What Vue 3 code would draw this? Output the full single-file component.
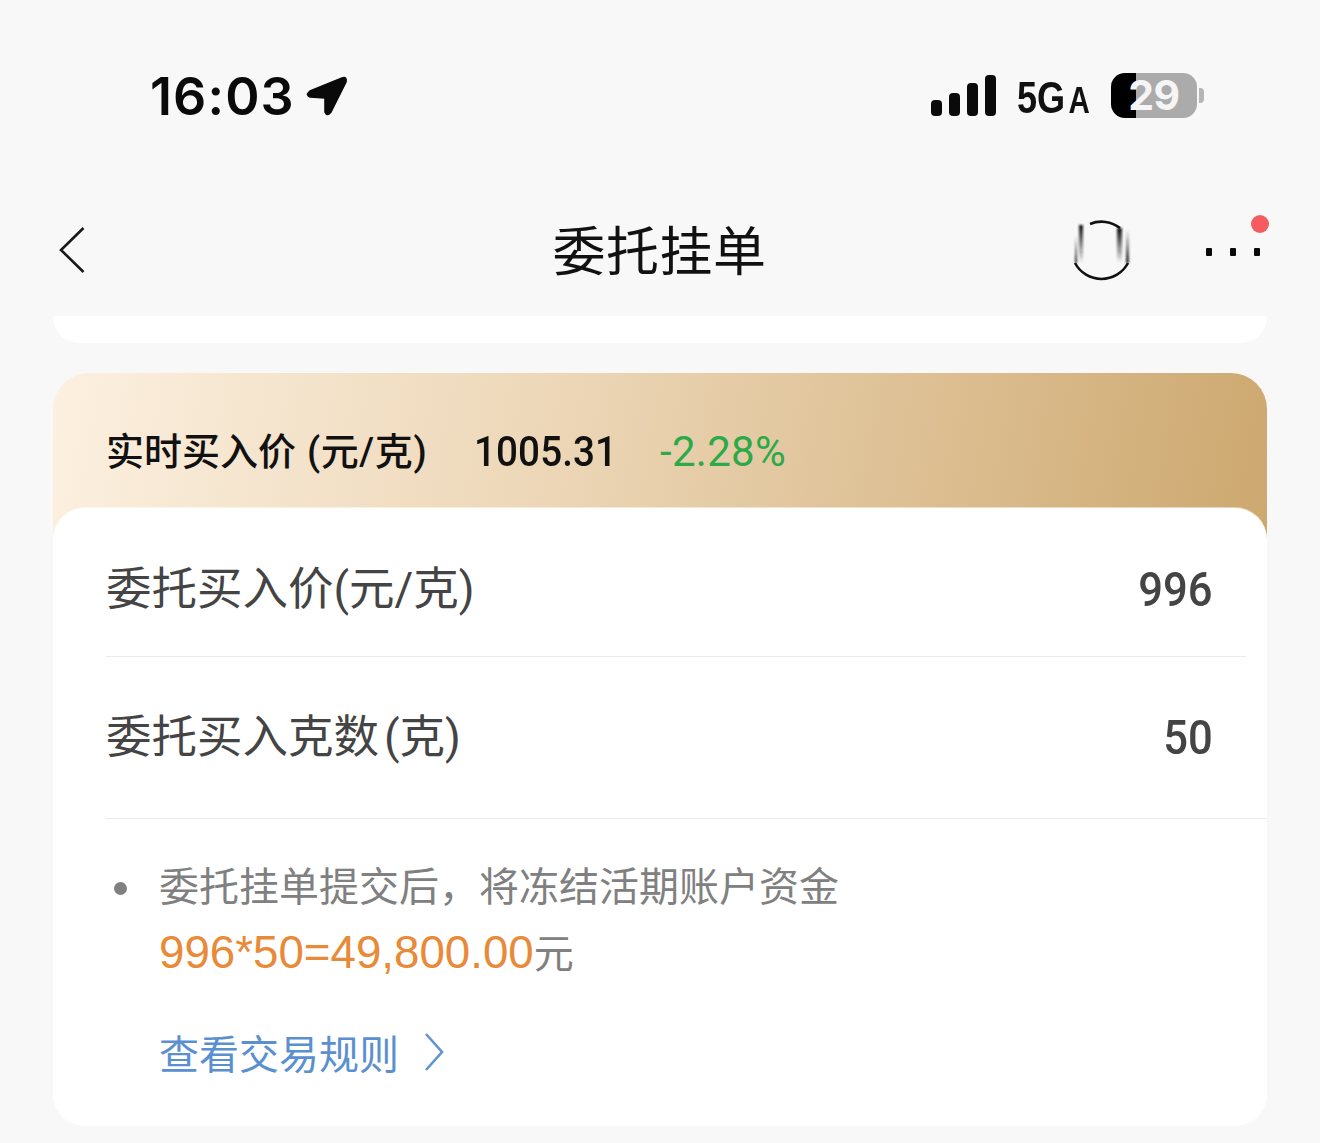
<script setup>
const bars = [16, 23, 33, 41];
</script>

<template>
  <main class="page">
    <div class="status">
      <div class="status-left">
        <span class="time">16:03</span>
        <svg class="arrow" viewBox="0 0 42 42" width="42" height="42">
          <path d="M36 3 L4 16 Q-1 20 4 22 L19 23 L19 37 Q21 42 25 37 L40 7 Q41 1 36 3 Z" fill="#0a0a0a" stroke="#0a0a0a" stroke-width="1.6" stroke-linejoin="round" />
        </svg>
      </div>
      <div class="status-right">
        <div class="signal">
          <i v-for="h in bars" :key="h" :style="{ height: h + 'px' }"></i>
        </div>
        <span class="net">5G<small>A</small></span>
        <div class="battery"><span>29</span></div>
        <i class="nub"></i>
      </div>
    </div>

    <nav class="nav">
      <svg class="back" viewBox="0 0 26 48" width="26" height="48">
        <path d="M24.5 2 L2 24 L24.5 46" fill="none" stroke="#1a1a1a" stroke-width="2.6" />
      </svg>
      <h1 class="title">委托挂单</h1>
      <div class="nav-right">
        <svg class="spinner" viewBox="0 0 60 66" width="60" height="66">
          <defs>
            <linearGradient id="fade" x1="0" y1="0" x2="0" y2="1">
              <stop offset="0" stop-color="#111" />
              <stop offset="1" stop-color="#111" stop-opacity="0.03" />
            </linearGradient>
            <linearGradient id="fadeUp" x1="0" y1="1" x2="0" y2="0">
              <stop offset="0" stop-color="#222" />
              <stop offset="1" stop-color="#222" stop-opacity="0" />
            </linearGradient>
            <filter id="soft" x="-100%" y="-10%" width="300%" height="120%">
              <feGaussianBlur stdDeviation="0.9" />
            </filter>
          </defs>
          <path d="M3 47 A30 30 0 0 0 56 47" fill="none" stroke="#111" stroke-width="2.6" />
          <path d="M18 8 A30 30 0 0 1 48 12" fill="none" stroke="#111" stroke-width="2.6" />
          <g filter="url(#soft)">
            <rect x="7" y="9" width="4" height="37" fill="url(#fade)" />
            <rect x="45" y="12" width="5" height="34" fill="url(#fade)" />
            <rect x="54" y="14" width="3" height="33" fill="url(#fadeUp)" />
            <rect x="3" y="20" width="2" height="27" fill="url(#fadeUp)" />
          </g>
        </svg>
        <div class="more">
          <i></i><i></i><i></i>
          <b class="red-dot"></b>
        </div>
      </div>
    </nav>

    <div class="peek"></div>

    <section class="gold">
      <span class="gold-label">实时买入价<span class="unit">(元/克)</span></span>
      <span class="gold-price">1005.31</span>
      <span class="gold-change">-2.28%</span>
    </section>

    <section class="card">
      <div class="row row-price">
        <span class="row-label">委托买入价<span class="unit tight">(元/克)</span></span>
        <span class="row-value">996</span>
      </div>
      <div class="row row-grams">
        <span class="row-label">委托买入克数<span class="unit">(克)</span></span>
        <span class="row-value">50</span>
      </div>
      <div class="note">
        <i class="bullet"></i>
        <p>委托挂单提交后，将冻结活期账户资金<br><span class="sum">996*50=49,800.00</span>元</p>
      </div>
      <a class="rules">
        查看交易规则
        <svg viewBox="0 0 22 40" width="22" height="40">
          <path d="M3 2 L19 20 L3 38" fill="none" stroke="#5f93d2" stroke-width="2.6" />
        </svg>
      </a>
    </section>
  </main>
</template>

<style>
html, body {
  margin: 0;
  background: #f8f8f8;
  overflow: hidden;
}
</style>

<style scoped>
.page {
  width: 1320px;
  height: 1143px;
  font-family: Roboto, "Noto Sans CJK SC", sans-serif;
}

.status {
  height: 192px;
  padding: 0 116px 0 150px;
  display: flex;
  align-items: center;
  justify-content: space-between;
}
.status-left {
  display: flex;
  align-items: center;
  gap: 11px;
}
.time {
  font-family: Inter, sans-serif;
  font-size: 52px;
  font-weight: 600;
  color: #0a0a0a;
  letter-spacing: 1.1px;
}
.status-right {
  display: flex;
  align-items: center;
  margin-top: -2px;
}
.signal {
  display: flex;
  align-items: flex-end;
  gap: 7px;
  height: 41px;
}
.signal i {
  width: 11px;
  border-radius: 4px;
  background: #0a0a0a;
}
.net {
  display: inline-block;
  margin: 6px 0 0 21px;
  width: 94px;
  font-family: "Liberation Sans", sans-serif;
  font-size: 44px;
  font-weight: 700;
  color: #111;
  white-space: nowrap;
  transform: scaleX(0.82);
  transform-origin: left center;
}
.net small {
  font-size: 36px;
  margin-left: 4px;
}
.battery {
  width: 86px;
  height: 45px;
  border-radius: 14px;
  background: linear-gradient(90deg, #000 29%, #ababab 29%);
  display: flex;
  align-items: center;
  justify-content: center;
}
.battery span {
  font-family: Inter, sans-serif;
  font-size: 41px;
  font-weight: 700;
  color: #f5f5f5;
  letter-spacing: -0.5px;
}
.nub {
  width: 5px;
  height: 15px;
  margin-left: 2px;
  border-radius: 0 4px 4px 0;
  background: #b5b5b5;
}

.nav {
  height: 116px;
  margin-bottom: 8px;
  padding: 0 60px 0 59px;
  display: grid;
  grid-template-columns: 1fr auto 1fr;
  align-items: center;
}
.title {
  margin: 0 0 4px;
  font-size: 53px;
  font-weight: 400;
  letter-spacing: 0.5px;
  color: #111;
}
.nav-right {
  display: flex;
  align-items: center;
  justify-content: flex-end;
  gap: 74px;
}
.spinner {
  margin-top: -2px;
}
.more {
  position: relative;
  display: flex;
  gap: 18px;
  margin-top: 4px;
}
.more i {
  width: 6px;
  height: 8px;
  border-radius: 1px;
  background: #0a0a0a;
}
.red-dot {
  position: absolute;
  right: -9px;
  top: -33px;
  width: 18px;
  height: 18px;
  border-radius: 50%;
  background: #f65b60;
}

.peek {
  height: 27px;
  margin: 0 53px 30px;
  background: #fff;
  border-radius: 0 0 26px 26px;
}

.gold {
  height: 175px;
  margin: 0 53px;
  padding: 0 53px;
  box-sizing: border-box;
  display: flex;
  align-items: flex-start;
  border-radius: 36px 36px 0 0;
  background: linear-gradient(100deg, #fcf0e0 0%, #ecd6b6 42%, #cda86f 100%);
  font-size: 38px;
  line-height: 158px;
  white-space: nowrap;
}
.gold-label {
  color: #111;
  width: 368px;
  font-weight: 500;
}
.gold-label .unit {
  margin-left: 11px;
  letter-spacing: 0.6px;
}
.gold-price {
  width: 186px;
  font-size: 42px;
  font-weight: 500;
  color: #111;
  transform: scaleX(0.92);
  transform-origin: left center;
  letter-spacing: 0.1px;
}
.gold-change {
  font-size: 42px;
  color: #2daa48;
  letter-spacing: 0.3px;
}

.card {
  position: relative;
  height: 618px;
  margin: -40px 53px 0;
  box-sizing: border-box;
  padding-left: 53px;
  background: #fff;
  border-radius: 32px;
  box-shadow: 0 -1px 0 rgba(255, 255, 255, 0.5);
}
.row {
  display: flex;
  align-items: center;
  justify-content: space-between;
  box-sizing: border-box;
  padding-right: 54px;
  border-bottom: 1px solid #ebebeb;
  color: #444;
}
.row-price {
  height: 149px;
  margin-right: 21px;
  padding: 15px 33px 0 0;
}
.row-grams {
  height: 162px;
}
.row-label {
  margin-bottom: 10px;
  font-size: 45.5px;
}
.row-label .unit {
  margin-left: 5px;
}
.row-label .unit.tight {
  margin-left: 0;
}
.row-value {
  font-size: 49px;
  font-weight: 500;
  transform: scaleX(0.89);
  transform-origin: right center;
}

.note {
  display: flex;
  margin-top: 36px;
  color: #808080;
  font-size: 40px;
}
.bullet {
  flex: none;
  width: 13px;
  height: 13px;
  margin: 27px 0 0 8px;
  border-radius: 50%;
  background: #808080;
}
.note p {
  margin: 0 0 0 32px;
  line-height: 65px;
}
.sum {
  font-family: "Liberation Sans", sans-serif;
  font-size: 45.7px;
  color: #e88a38;
}
.rules {
  display: flex;
  align-items: center;
  gap: 24px;
  margin: 36px 0 0 53px;
  font-size: 40px;
  color: #5b90d0;
}
</style>
